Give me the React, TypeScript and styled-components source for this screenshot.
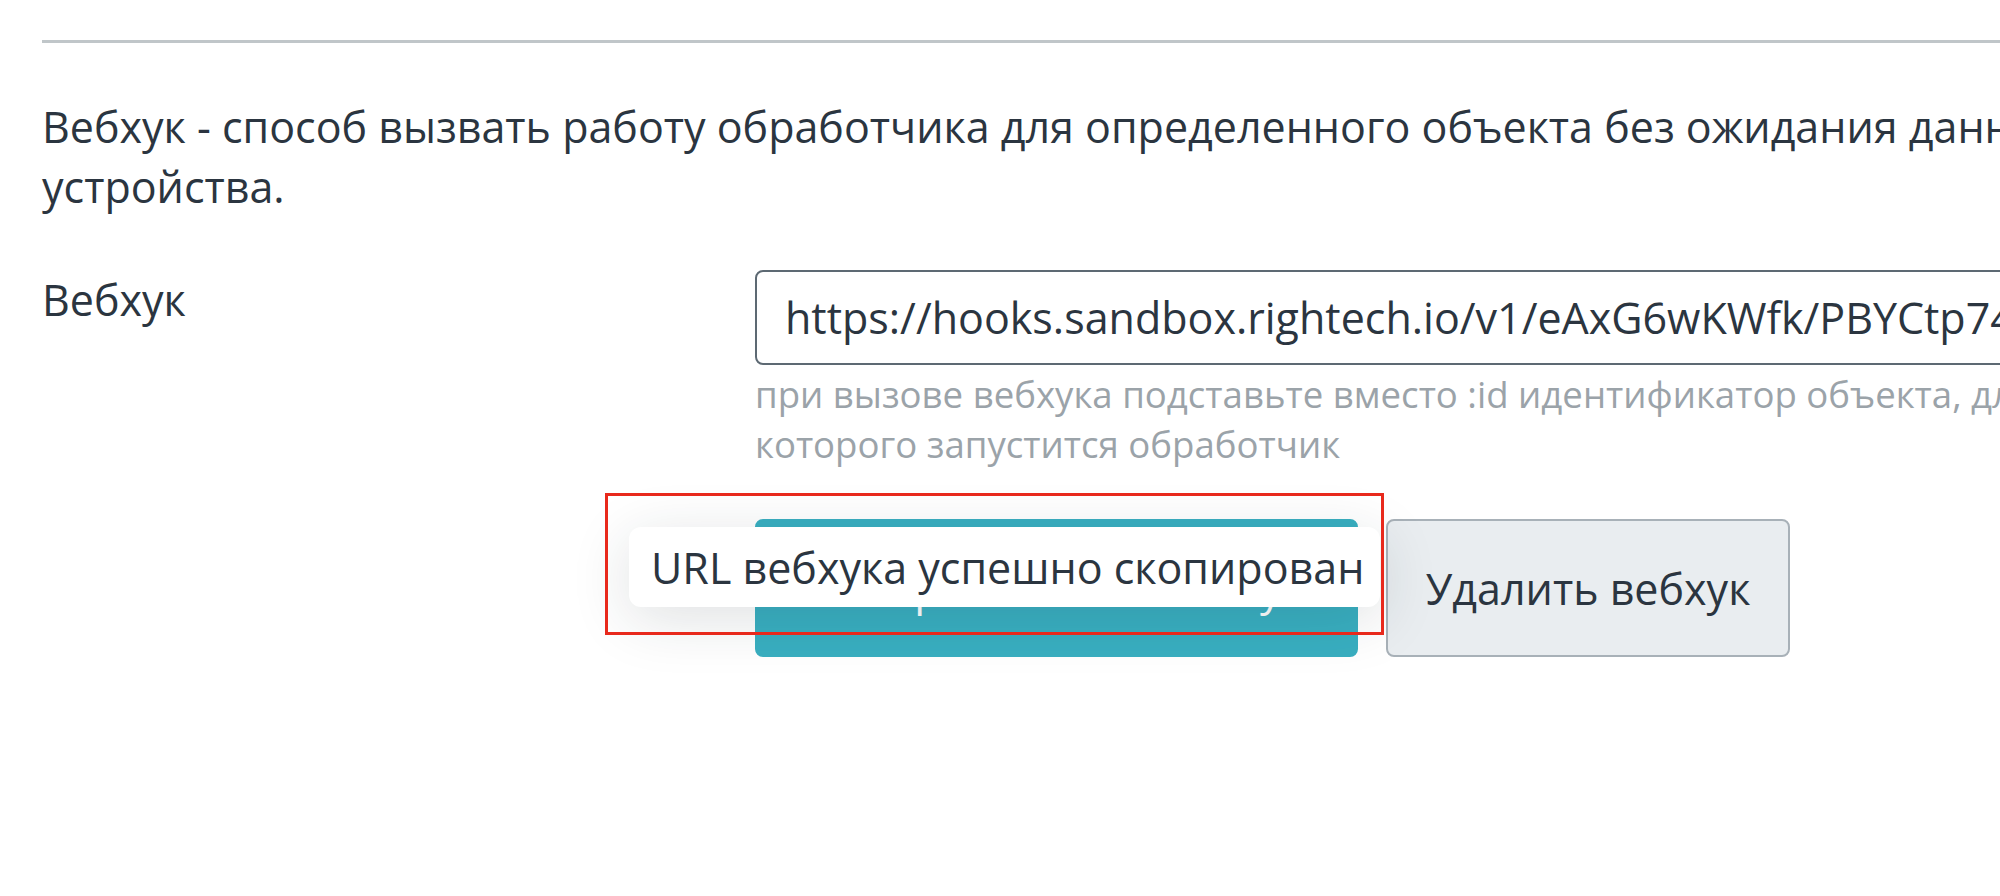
import React from "react";
import styled, { createGlobalStyle } from "styled-components";

const GlobalStyle = createGlobalStyle`
  html, body {
    margin: 0;
    padding: 0;
    background: #ffffff;
    overflow: hidden;
  }
  body {
    font-family: "Open Sans", "Liberation Sans", sans-serif;
    color: #2b3540;
  }
`;

const Page = styled.div`
  width: 2108px;
  padding: 40px 42px;
`;

const Divider = styled.hr`
  margin: 0;
  border: none;
  border-top: 3px solid #c0c6c9;
`;

const Description = styled.p`
  margin: 54px 0 0;
  font-size: 43px;
  line-height: 60px;
`;

const FieldRow = styled.div`
  display: grid;
  grid-template-columns: 713px 1fr;
  margin-top: 53px;
`;

const Label = styled.label`
  font-size: 43px;
  line-height: 60px;
`;

const FieldBody = styled.div`
  display: flex;
  flex-direction: column;
`;

const UrlInput = styled.input`
  box-sizing: border-box;
  width: 100%;
  height: 95px;
  padding: 0 28px;
  border: 2px solid #5d6973;
  border-radius: 8px;
  font-family: inherit;
  font-size: 43px;
  color: #2b3540;
  background: #fff;
  outline: none;
`;

const Hint = styled.div`
  margin-top: 4px;
  font-size: 36.6px;
  line-height: 50px;
  color: #9ba3a9;
`;

const Actions = styled.div`
  position: relative;
  display: flex;
  gap: 28px;
  margin-top: 50px;
`;

const Button = styled.button<{ $primary?: boolean }>`
  box-sizing: border-box;
  height: 138px;
  padding: 0 ${(p) => (p.$primary ? "28px" : "38px")};
  border-radius: 8px;
  font-family: inherit;
  font-size: 43px;
  cursor: pointer;
  border: 2px solid ${(p) => (p.$primary ? "#39afc1" : "#a8b1b8")};
  background: ${(p) => (p.$primary ? "#39afc1" : "#e9edf0")};
  color: ${(p) => (p.$primary ? "#ffffff" : "#2b3540")};
`;

const Toast = styled.div`
  position: absolute;
  left: -126px;
  top: 8px;
  width: 751px;
  height: 80px;
  box-sizing: border-box;
  display: flex;
  align-items: center;
  padding: 0 22px;
  background: #ffffff;
  border-radius: 12px;
  box-shadow: 0 12px 60px rgba(30, 40, 50, 0.14);
  font-size: 43px;
  color: #2b3540;
  white-space: nowrap;
`;

const Highlight = styled.div`
  position: absolute;
  left: -150px;
  top: -26px;
  width: 779px;
  height: 142px;
  box-sizing: border-box;
  border: 3px solid #e8291c;
  pointer-events: none;
`;

const App: React.FC = () => {
  return (
    <Page>
      <GlobalStyle />
      <Divider />
      <Description>
        Вебхук - способ вызвать работу обработчика для определенного объекта без
        ожидания данных от устройства.
      </Description>
      <FieldRow>
        <Label htmlFor="webhook">Вебхук</Label>
        <FieldBody>
          <UrlInput
            id="webhook"
            readOnly
            value="https://hooks.sandbox.rightech.io/v1/eAxG6wKWfk/PBYCtp74xQ/:id"
          />
          <Hint>
            при вызове вебхука подставьте вместо :id идентификатор объекта, для
            которого запустится обработчик
          </Hint>
          <Actions>
            <Button $primary>Скопировать URL вебхука</Button>
            <Button>Удалить вебхук</Button>
            <Toast>URL вебхука успешно скопирован</Toast>
            <Highlight />
          </Actions>
        </FieldBody>
      </FieldRow>
    </Page>
  );
};

export default App;
